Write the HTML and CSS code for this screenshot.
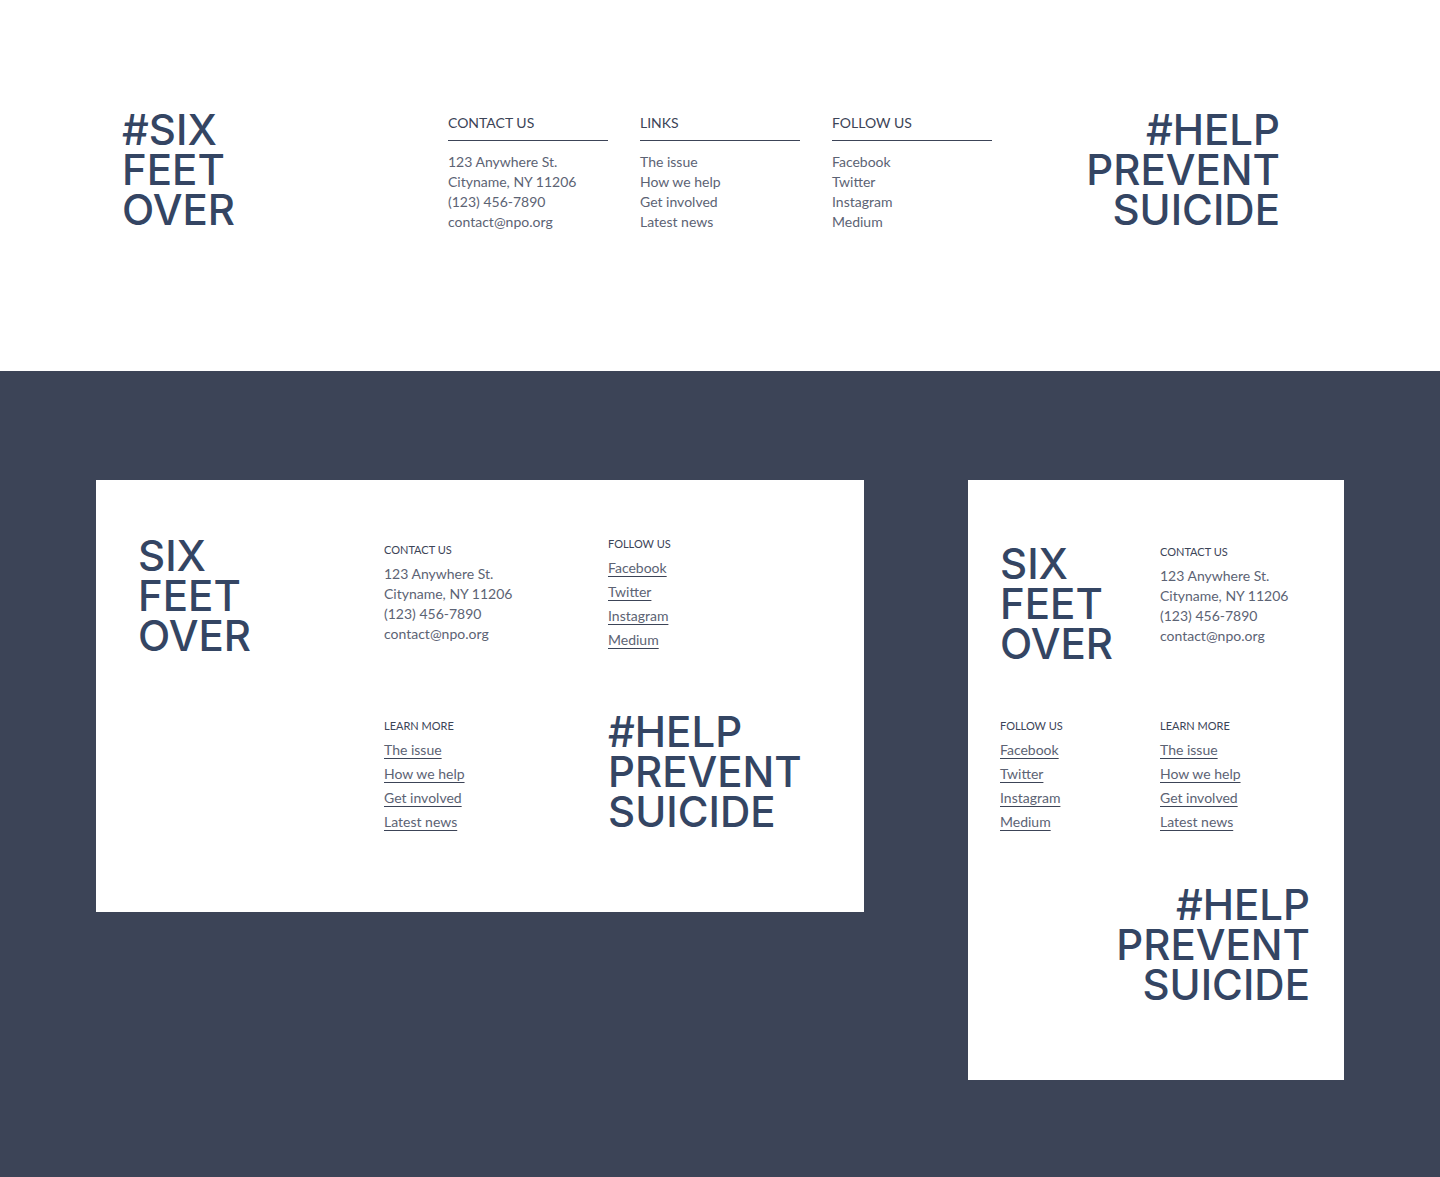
FILE: index.html
```html
<!DOCTYPE html>
<html lang="en">
<head>
<meta charset="utf-8">
<meta name="viewport" content="width=device-width, initial-scale=1">
<title>Six Feet Over</title>
<link rel="stylesheet" href="styles.css">
</head>
<body>
<footer class="wide">
  <p class="display wide-logo">#SIX<br>FEET<br>OVER</p>
  <section class="column">
    <h2 class="column-title">CONTACT US</h2>
    <address class="lines">123 Anywhere St.<br>Cityname, NY 11206<br>(123) 456-7890<br><a href="mailto:contact@npo.org">contact@npo.org</a></address>
  </section>
  <nav class="column" aria-label="Links">
    <h2 class="column-title">LINKS</h2>
    <ul class="lines">
      <li><a href="#issue">The issue</a></li>
      <li><a href="#help">How we help</a></li>
      <li><a href="#involved">Get involved</a></li>
      <li><a href="#news">Latest news</a></li>
    </ul>
  </nav>
  <nav class="column" aria-label="Follow us">
    <h2 class="column-title">FOLLOW US</h2>
    <ul class="lines">
      <li><a href="#facebook">Facebook</a></li>
      <li><a href="#twitter">Twitter</a></li>
      <li><a href="#instagram">Instagram</a></li>
      <li><a href="#medium">Medium</a></li>
    </ul>
  </nav>
  <p class="display wide-slogan">#HELP<br>PREVENT<br>SUICIDE</p>
</footer>

<main class="stage">
  <footer class="card tablet">
    <p class="display">SIX<br>FEET<br>OVER</p>
    <section class="group lowered">
      <h2 class="group-title">CONTACT US</h2>
      <address class="lines">123 Anywhere St.<br>Cityname, NY 11206<br>(123) 456-7890<br><a href="mailto:contact@npo.org">contact@npo.org</a></address>
    </section>
    <nav class="group" aria-label="Follow us, tablet">
      <h2 class="group-title">FOLLOW US</h2>
      <ul class="links">
        <li><a href="#facebook">Facebook</a></li>
        <li><a href="#twitter">Twitter</a></li>
        <li><a href="#instagram">Instagram</a></li>
        <li><a href="#medium">Medium</a></li>
      </ul>
    </nav>
    <nav class="group lowered second" aria-label="Learn more, tablet">
      <h2 class="group-title">LEARN MORE</h2>
      <ul class="links">
        <li><a href="#issue">The issue</a></li>
        <li><a href="#help">How we help</a></li>
        <li><a href="#involved">Get involved</a></li>
        <li><a href="#news">Latest news</a></li>
      </ul>
    </nav>
    <p class="display">#HELP<br>PREVENT<br>SUICIDE</p>
  </footer>

  <footer class="card phone">
    <p class="display">SIX<br>FEET<br>OVER</p>
    <section class="group">
      <h2 class="group-title">CONTACT US</h2>
      <address class="lines">123 Anywhere St.<br>Cityname, NY 11206<br>(123) 456-7890<br><a href="mailto:contact@npo.org">contact@npo.org</a></address>
    </section>
    <nav class="group lowered" aria-label="Follow us, phone">
      <h2 class="group-title">FOLLOW US</h2>
      <ul class="links">
        <li><a href="#facebook">Facebook</a></li>
        <li><a href="#twitter">Twitter</a></li>
        <li><a href="#instagram">Instagram</a></li>
        <li><a href="#medium">Medium</a></li>
      </ul>
    </nav>
    <nav class="group lowered" aria-label="Learn more, phone">
      <h2 class="group-title">LEARN MORE</h2>
      <ul class="links">
        <li><a href="#issue">The issue</a></li>
        <li><a href="#help">How we help</a></li>
        <li><a href="#involved">Get involved</a></li>
        <li><a href="#news">Latest news</a></li>
      </ul>
    </nav>
    <p class="display phone-slogan">#HELP<br>PREVENT<br>SUICIDE</p>
  </footer>
</main>
</body>
</html>
```
FILE: styles.css
```css
:root {
  --ink: #3c4457;
  --soft: #5c6374;
  --brand: #344563;
}

* {
  box-sizing: border-box;
}

body {
  margin: 0;
  background: var(--ink);
  color: var(--ink);
  font: 400 14px/20px Lato, "Open Sans", sans-serif;
}

h2, p, ul {
  margin: 0;
  padding: 0;
  font-weight: 400;
}

ul {
  list-style: none;
}

address {
  font-style: normal;
}

a {
  color: inherit;
  text-decoration: none;
}

.display {
  color: var(--brand);
  font: 500 42px/40px Inter, "Liberation Sans", sans-serif;
}

.lines,
.links {
  color: var(--soft);
}

/* Full-width footer */
.wide {
  display: grid;
  grid-template-columns: 1fr repeat(3, 160px) 1fr;
  column-gap: 32px;
  align-items: start;
  padding: 110px 96px 139px;
  background: #fff;
}

.wide-logo {
  padding-left: 26px;
}

.wide-slogan {
  padding-right: 64px;
  text-align: right;
}

.column {
  padding-top: 3px;
}

.column-title {
  padding-bottom: 7px;
  margin-bottom: 11px;
  border-bottom: 1px solid var(--ink);
  font-size: 14px;
}

/* Narrower variants on the dark stage */
.stage {
  display: flex;
  flex-wrap: wrap;
  justify-content: space-between;
  align-items: start;
  gap: 32px;
  padding: 109px 96px 97px;
}

.card {
  display: grid;
  align-items: start;
  max-width: 100%;
  background: #fff;
}

.tablet {
  grid-template-columns: 246px 224px 1fr;
  row-gap: 56px;
  width: 768px;
  padding: 56px 32px 78px 42px;
}

.phone {
  grid-template-columns: 160px 1fr;
  row-gap: 48px;
  width: 376px;
  padding: 64px 34px 75px 32px;
}

.second {
  grid-column: 2;
}

.lowered {
  padding-top: 6px;
}

.phone-slogan {
  grid-column: 1 / -1;
  padding-top: 3px;
  text-align: right;
}

.group-title {
  font-size: 11px;
  line-height: 16px;
}

.group .lines {
  margin-top: 6px;
}

.links {
  margin-top: 4px;
  line-height: 24px;
}

.links a {
  text-decoration: underline 1px var(--ink);
  text-decoration-skip-ink: none;
  text-underline-offset: 3px;
}
```
